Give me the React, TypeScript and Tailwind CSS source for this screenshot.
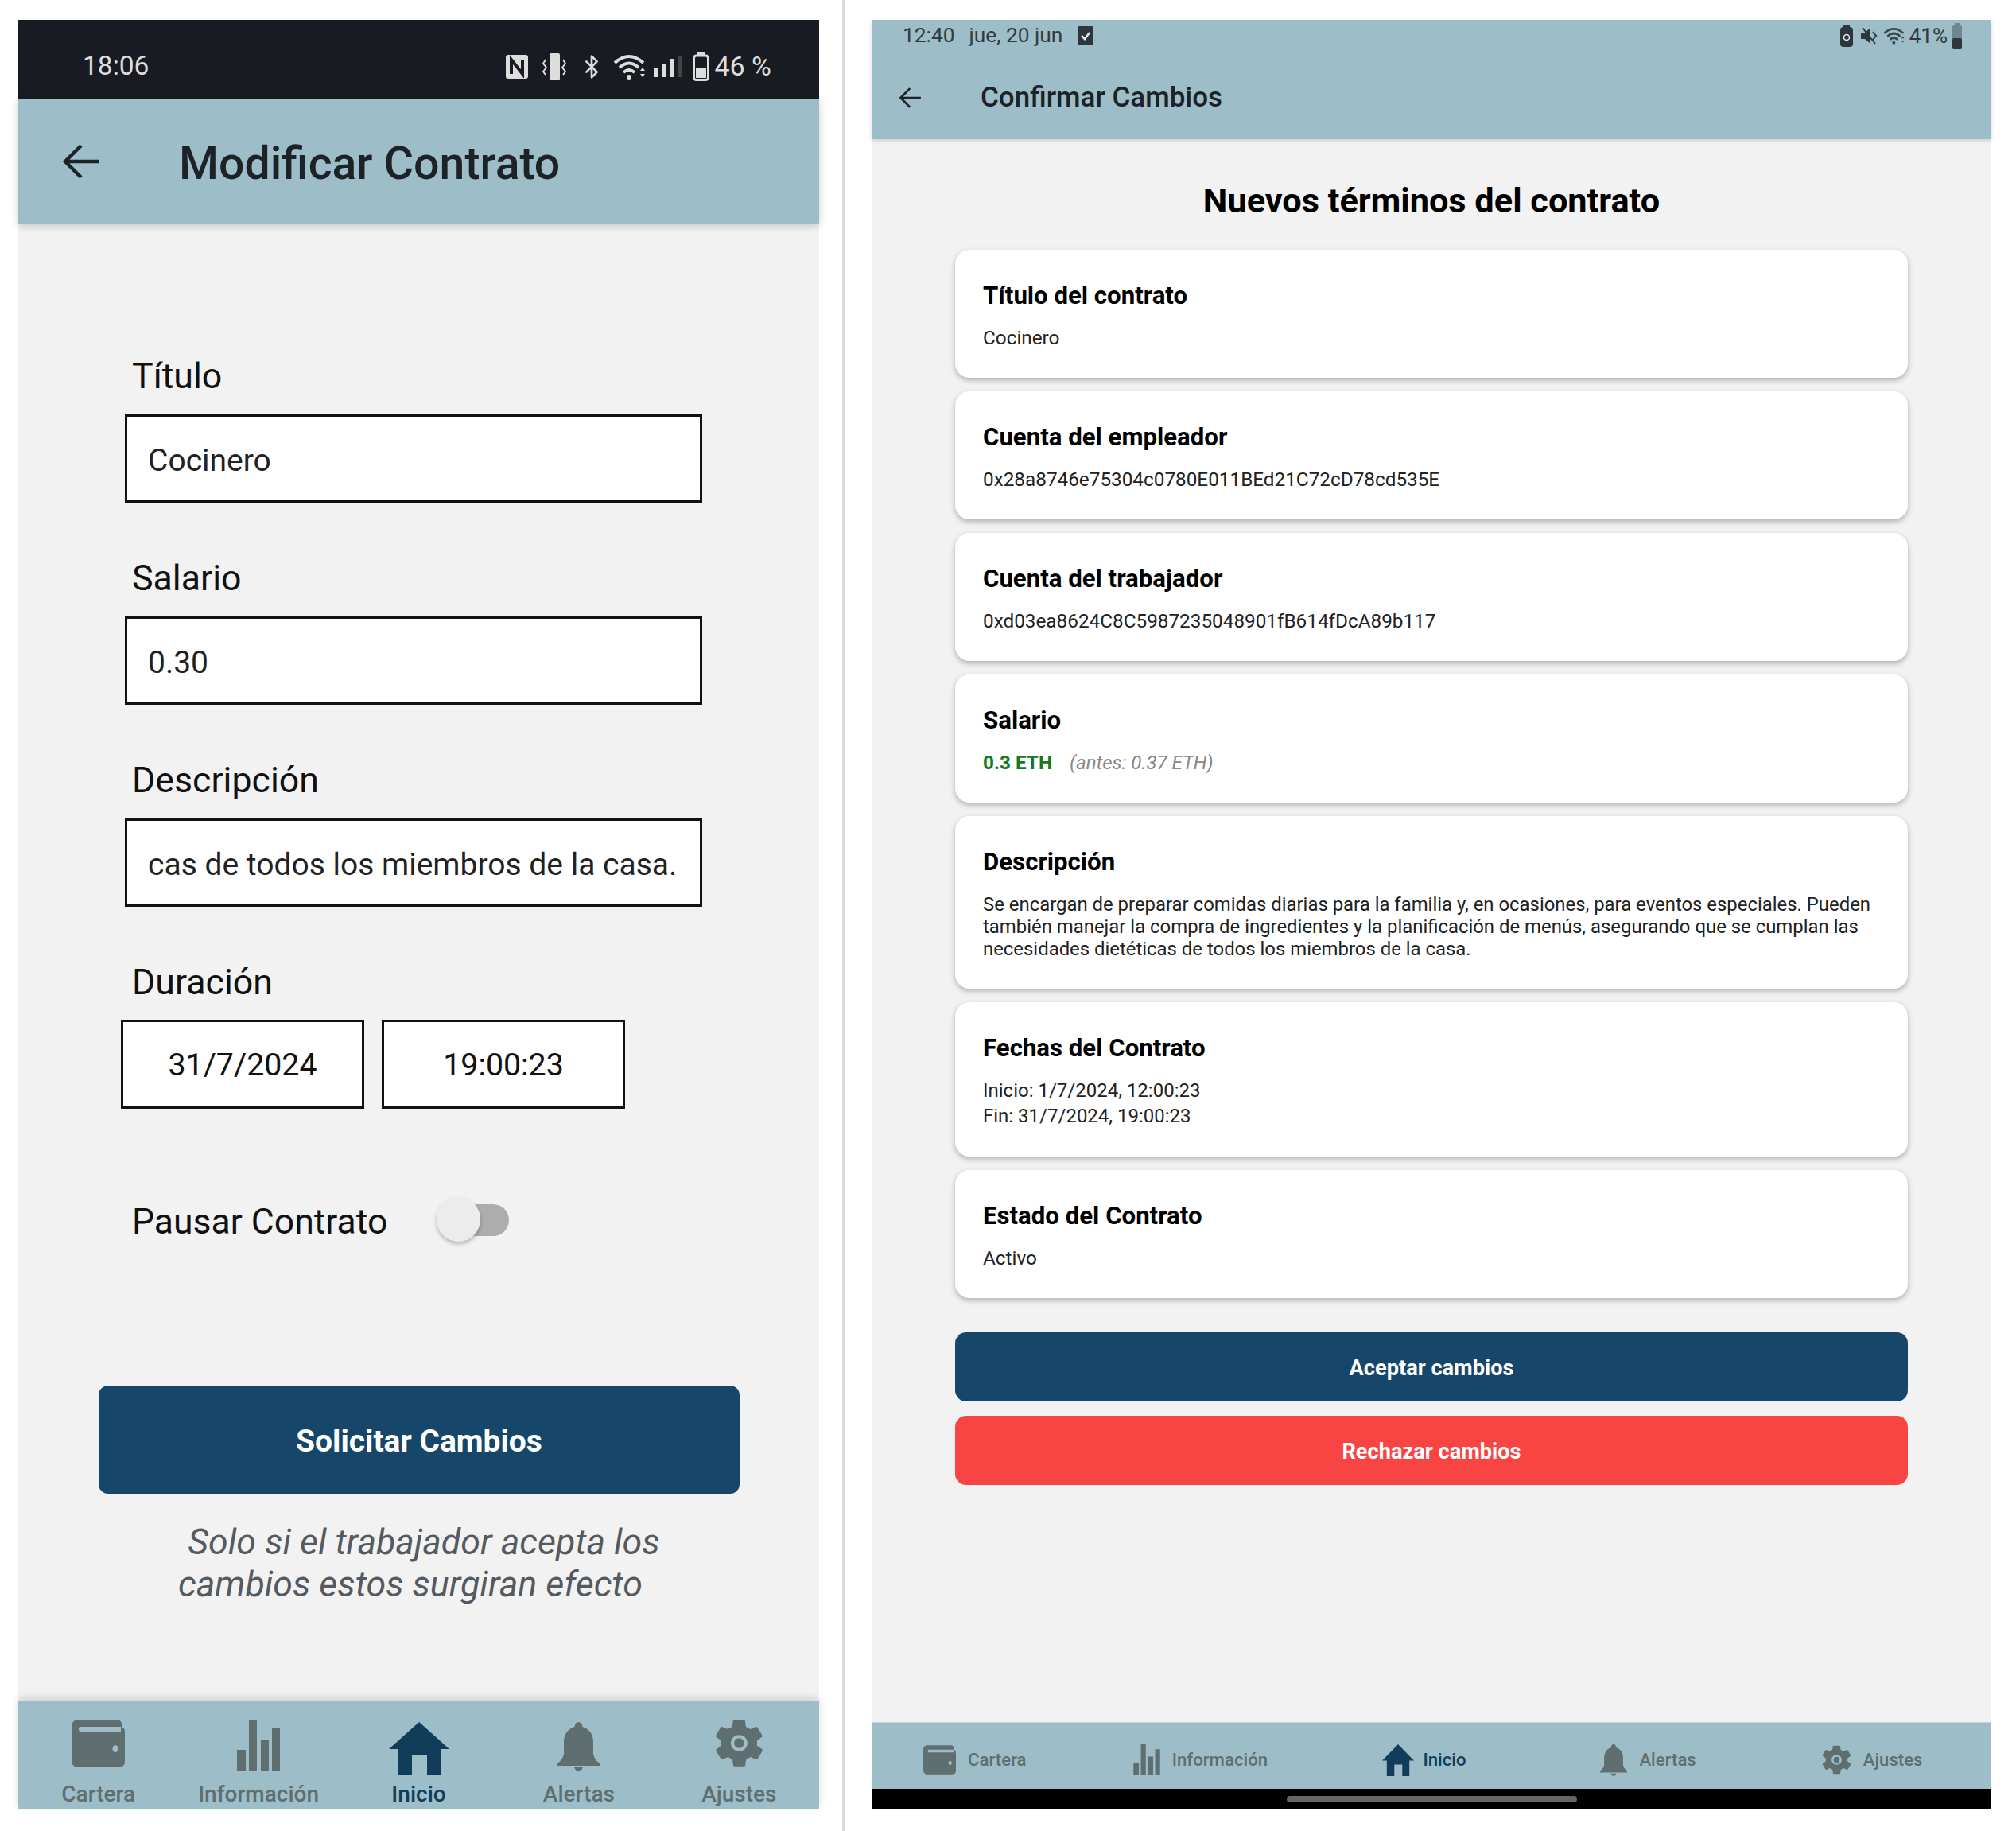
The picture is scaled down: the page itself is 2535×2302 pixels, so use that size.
import { Bluetooth } from "lucide-react";

const WalletIcon = ({ className }: { className: string }) => (
  <svg viewBox="0 0 67 60" className={className} fill="currentColor">
    <path fillRule="evenodd" d="M9 0H56Q63 0 63 6V10H65Q67 12 67 16V52Q67 60 59 60H9Q0 60 0 51V9Q0 0 9 0ZM10 9Q8 12 10 15H62V9ZM55 32a3.5 4.5 0 1 0 .01 0Z" />
  </svg>
);

const BarsIcon = ({ className }: { className: string }) => (
  <svg viewBox="0 0 54 63" className={className} fill="currentColor">
    <rect x="0" y="37" width="11" height="26" />
    <rect x="15" y="0" width="10" height="63" />
    <rect x="30" y="25" width="10" height="38" />
    <rect x="44" y="10" width="10" height="53" />
  </svg>
);

const HomeIcon = ({ className }: { className: string }) => (
  <svg viewBox="0 0 76 66" preserveAspectRatio="none" className={className} fill="currentColor">
    <path d="M38 0L76 34H65V66H48V42H29V66H11V34H0Z" />
  </svg>
);

const BellIcon = ({ className }: { className: string }) => (
  <svg viewBox="0 0 53 62" className={className} fill="currentColor">
    <path d="M26.5 0Q31 0 31.5 6Q44 10 45 24V40Q46 47 53 52V55H0V52Q7 47 8 40V24Q9 10 21.5 6Q22 0 26.5 0ZM21 57H32Q30 62 26.5 62Q23 62 21 57Z" />
  </svg>
);

const GearIcon = ({ className }: { className: string }) => (
  <svg viewBox="40 50 432 412" className={className} fill="currentColor">
    <path d="M413.967 276.8c1.06-6.235 1.06-13.518 1.06-20.8s-1.06-13.518-1.06-20.8l44.667-34.318c4.26-3.118 5.319-8.317 2.13-13.518L418.215 115.6c-2.129-4.164-8.507-6.235-12.767-4.164l-53.186 20.801c-10.638-8.318-23.394-15.601-36.16-20.801l-8.508-55.117c-1.06-4.154-5.319-8.318-10.638-8.318h-85.098c-5.318 0-9.577 4.164-10.637 8.318l-8.518 55.117c-12.767 5.2-24.464 12.482-36.171 20.801l-53.186-20.801c-5.319-2.071-10.638 0-12.767 4.164L49.1 187.365c-2.119 4.153-1.061 10.399 2.129 13.518L96.97 235.2c0 7.282-1.06 13.518-1.06 20.8s1.06 13.518 1.06 20.8l-44.668 34.318c-4.26 3.118-5.318 8.317-2.13 13.518L92.721 396.4c2.13 4.164 8.508 6.235 12.767 4.164l53.187-20.801c10.637 8.318 23.394 15.601 36.16 20.801l8.508 55.117c1.069 5.2 5.318 8.318 10.637 8.318h85.098c5.319 0 9.578-4.164 10.638-8.318l8.518-55.117c12.757-5.2 24.464-12.482 36.16-20.801l53.187 20.801c5.318 2.071 10.637 0 12.767-4.164l42.549-71.765c2.129-4.153 1.06-10.399-2.13-13.518l-46.8-34.317zm-158.499 52c-41.489 0-74.46-32.235-74.46-72.8s32.971-72.8 74.46-72.8 74.461 32.235 74.461 72.8-32.972 72.8-74.461 72.8z" />
    <circle cx="255" cy="256" r="44" />
  </svg>
);

const BackArrow = ({ className }: { className: string }) => (
  <svg viewBox="0 0 47 44" className={className} fill="none" stroke="currentColor" strokeWidth="4.5">
    <path d="M47 22H4M24 2L4 22L24 42" />
  </svg>
);

const Wifi = ({ className }: { className: string }) => (
  <svg viewBox="0 0 42 34" className={className} fill="none" stroke="currentColor" strokeWidth="4">
    <path d="M2 12Q20 -4 38 12M8 18Q20 7 32 18M13 24Q20 18 27 24" />
    <circle cx="20" cy="30" r="3" fill="currentColor" stroke="none" />
    <path d="M34 22L37 18L40 22ZM34 26L37 30L40 26Z" fill="currentColor" stroke="none" />
  </svg>
);

const tabs = [
  { label: "Cartera", icon: WalletIcon, left: "w-[67px] h-[60px] mt-[1px]", right: "w-[41px] h-[37px] ml-[-4px]" },
  { label: "Información", icon: BarsIcon, left: "w-[54px] h-[63px] mt-[2px]", right: "w-[34px] h-[39px]" },
  { label: "Inicio", icon: HomeIcon, left: "w-[76px] h-[66px] mt-[4px]", right: "w-[40px] h-[40px] mr-[-4px]", active: true },
  { label: "Alertas", icon: BellIcon, left: "w-[53px] h-[62px] mt-[4px]", right: "w-[34px] h-[40px]" },
  { label: "Ajustes", icon: GearIcon, left: "w-[61px] h-[61px]", right: "w-[37px] h-[37px]" },
];

const Field = ({ label, value }: { label: string; value: string }) => (
  <div className="mb-[68px]">
    <div className="ml-[9px] mb-[21px] h-[54px] text-[44.7px] leading-[54px] text-[#111]">{label}</div>
    <div className="w-[726px] h-[111px] border-[3px] border-[#111] bg-white pl-[26px] pt-[5px] flex items-center text-[39px] text-[#222] whitespace-nowrap">
      {value}
    </div>
  </div>
);

const Card = ({ title, children }: { title: string; children: React.ReactNode }) => (
  <div className="bg-white rounded-[18px] shadow-[0_3px_7px_rgba(0,0,0,0.28)] pl-[35px] pr-[30px] pt-[35px] pb-[36px]">
    <div className="text-[31.2px] leading-[46px] font-bold text-black mb-[16px]">{title}</div>
    <div className="text-[24.3px] leading-[28px] text-[#222]">{children}</div>
  </div>
);

export default function App() {
  return (
    <div className="w-[2535px] h-[2302px] bg-white flex items-start pt-[25px] pl-[23px] font-['Roboto',sans-serif] overflow-hidden">
      {/* Phone */}
      <div className="w-[1007px] h-[2249px] bg-[#f2f2f2] flex flex-col">
        <div className="h-[99px] pt-[18px] bg-[#181c22] text-[#dddddd] flex items-center justify-between pl-[81px] pr-[60px]">
          <span className="text-[33.5px]">18:06</span>
          <div className="flex items-center">
            <svg viewBox="0 0 28 30" className="w-[28px] h-[30px] mr-[18px]">
              <rect width="28" height="30" rx="3" fill="#dddddd" />
              <path d="M7 24V6L21 24V6" fill="none" stroke="#181c22" strokeWidth="4" />
            </svg>
            <svg viewBox="0 0 30 34" className="w-[30px] h-[34px] mr-[16px]" fill="#dddddd">
              <rect x="9" y="0" width="13" height="34" rx="2" />
              <path d="M4 8L1 13L5 18L1 23L4 27M26 8L29 13L25 18L29 23L26 27" fill="none" stroke="#dddddd" strokeWidth="2" />
            </svg>
            <Bluetooth className="w-[32px] h-[36px] mr-[11px]" strokeWidth={2} />
            <Wifi className="w-[42px] h-[34px] mr-[9px]" />
            <svg viewBox="0 0 36 26" className="w-[36px] h-[26px] mr-[13px]" fill="#dddddd">
              <rect x="0" y="15" width="6" height="11" />
              <rect x="10" y="9" width="6" height="17" />
              <rect x="20" y="3" width="6" height="23" />
              <rect x="30" y="0" width="5" height="26" fill="#444" />
            </svg>
            <svg viewBox="0 0 21 36" className="w-[21px] h-[36px] mr-[6px]">
              <rect x="6" y="0" width="9" height="3" fill="#dddddd" />
              <rect x="1.5" y="4" width="18" height="30.5" rx="3" fill="none" stroke="#dddddd" strokeWidth="3" />
              <rect x="4" y="19" width="13" height="13" fill="#dddddd" />
            </svg>
            <span className="text-[34px]">46 %</span>
          </div>
        </div>
        <div className="relative h-[157px] bg-[#9dbdc8] flex items-center shadow-[0_3px_10px_rgba(0,0,0,0.2)]">
          <BackArrow className="ml-[55px] w-[47px] h-[44px] text-[#1d2226]" />
          <span className="ml-[100px] pt-[6px] text-[57.2px] font-medium text-[#1d2226]">Modificar Contrato</span>
        </div>

        <div className="flex-1 pt-[165px] pl-[134px]">
          <Field label="Título" value="Cocinero" />
          <Field label="Salario" value="0.30" />
          <Field label="Descripción" value="cas de todos los miembros de la casa." />
          <div className="ml-[9px] mb-[22px] h-[54px] text-[44.7px] leading-[54px] text-[#111]">Duración</div>
          <div className="flex gap-[22px] ml-[-5px] mt-[-2px]">
            <div className="w-[306px] h-[112px] border-[3px] border-[#111] bg-white pt-[2px] flex items-center justify-center text-[39.3px] text-[#111]">31/7/2024</div>
            <div className="w-[306px] h-[112px] border-[3px] border-[#111] bg-white pt-[2px] flex items-center justify-center text-[39.3px] text-[#111]">19:00:23</div>
          </div>
          <div className="ml-[9px] mt-[112px] h-[60px] flex items-center">
            <span className="text-[44.5px] text-[#111]">Pausar Contrato</span>
            <div className="relative ml-[62px] w-[91px] h-[40px] ">
              <div className="absolute right-0 top-[-2px] w-[60px] h-[40px] rounded-full bg-[#adadad]" />
              <div className="absolute left-0 top-[-11px] w-[55px] h-[56px] rounded-full bg-[#ececec] shadow-[0_3px_5px_rgba(0,0,0,0.25)]" />
            </div>
          </div>
          <div className="ml-[-33px] mt-[176px] w-[806px] h-[136px] pt-[4px] rounded-[12px] bg-[#16476a] flex items-center justify-center text-[39px] font-bold text-white">
            Solicitar Cambios
          </div>
          <div className="ml-[-33px] mt-[35px] w-[806px] text-center text-[44.7px] leading-[53px] italic text-[#555a60]">
            <div className="pl-[12px]">Solo si el trabajador acepta los</div>
            <div className="pr-[22px]">cambios estos surgiran efecto</div>
          </div>
        </div>

        <div className="relative h-[136px] bg-[#9dbdc8] flex shadow-[0_-3px_10px_rgba(0,0,0,0.15)]">
          {tabs.map((t) => (
            <div key={t.label} className={`flex-1 flex flex-col items-center pt-[23px] ${t.active ? "text-[#123d5a]" : "text-[#5f6f6f]"}`}>
              <div className="h-[80px]">
                <t.icon className={t.left} />
              </div>
              <span className="text-[28px] leading-[36px] font-medium">{t.label}</span>
            </div>
          ))}
        </div>
      </div>

      {/* Divider between the two screenshots */}
      <div className="ml-[29px] mt-[-25px] w-[3px] h-[2302px] bg-[#d9d9d9]" />

      {/* Tablet */}
      <div className="ml-[34px] w-[1408px] h-[2249px] bg-[#f2f2f2] flex flex-col">
        <div className="relative h-[150px] bg-[#9dbdc8] flex flex-col shadow-[0_2px_5px_rgba(0,0,0,0.15)]">
          <div className="h-[40px] flex items-center justify-between pl-[39px] pr-[37px] text-[26.3px] text-[#333b40]">
            <div className="flex items-center">
              <span>12:40</span>
              <span className="ml-[18px]">jue, 20 jun</span>
              <svg viewBox="0 0 20 24" className="ml-[19px] w-[20px] h-[24px]">
                <rect width="20" height="24" rx="2" fill="#2d363b" />
                <path d="M5 12L9 16L15 8" fill="none" stroke="#dfe8ec" strokeWidth="2.5" />
              </svg>
            </div>
            <div className="flex items-center">
              <svg viewBox="0 0 16 28" className="w-[16px] h-[28px] mr-[10px]">
                <rect x="0" y="3" width="16" height="25" rx="4" fill="#2d363b" />
                <rect x="4" y="0" width="8" height="4" fill="#2d363b" />
                <circle cx="8" cy="16" r="3.5" fill="none" stroke="#dfe8ec" strokeWidth="1.5" />
              </svg>
              <svg viewBox="0 0 22 24" className="w-[22px] h-[24px] mr-[6px]">
                <path d="M0 8H5L12 2V22L5 16H0Z" fill="#2d363b" />
                <path d="M2 2L18 22M15 7L19 12L15 17" fill="none" stroke="#2d363b" strokeWidth="2" />
              </svg>
              <Wifi className="w-[28px] h-[26px] mr-[5px] text-[#3c4a50]" />
              <span className="text-[26px]">41%</span>
              <svg viewBox="0 0 12 32" className="w-[12px] h-[32px] ml-[6px]">
                <rect x="3" y="0" width="6" height="4" fill="#6d8690" />
                <rect x="0" y="3" width="12" height="29" rx="2" fill="#6d8690" />
                <rect x="0" y="19" width="12" height="13" rx="2" fill="#2d363b" />
              </svg>
            </div>
          </div>
          <div className="flex items-center mt-[32px]">
            <BackArrow className="ml-[34px] w-[28px] h-[26px] text-[#1d2226]" />
            <span className="ml-[75px] text-[35px] font-medium text-[#1d2226]">Confirmar Cambios</span>
          </div>
        </div>

        <div className="flex-1 px-[105px]">
          <h1 className="mt-[49px] mb-[32px] text-center text-[43.3px] leading-[58px] font-bold text-black">Nuevos términos del contrato</h1>
          <div className="flex flex-col gap-[17px]">
            <Card title="Título del contrato">Cocinero</Card>
            <Card title="Cuenta del empleador">0x28a8746e75304c0780E011BEd21C72cD78cd535E</Card>
            <Card title="Cuenta del trabajador">0xd03ea8624C8C5987235048901fB614fDcA89b117</Card>
            <Card title="Salario">
              <span className="font-bold text-[#137a1e]">0.3 ETH</span>
              <span className="ml-[22px] italic text-[#888] text-[24px]">(antes: 0.37 ETH)</span>
            </Card>
            <Card title="Descripción">
              <div className="text-[23.9px]">
                Se encargan de preparar comidas diarias para la familia y, en ocasiones, para eventos especiales. Pueden también manejar la compra de ingredientes y la planificación de menús, asegurando que se cumplan las necesidades dietéticas de todos los miembros de la casa.
              </div>
            </Card>
            <Card title="Fechas del Contrato">
              <div className="mt-[-2px] mb-[-1px] text-[24px]">
                <div className="leading-[32px]">Inicio: 1/7/2024, 12:00:23</div>
                <div className="leading-[32px]">Fin: 31/7/2024, 19:00:23</div>
              </div>
            </Card>
            <Card title="Estado del Contrato">Activo</Card>
          </div>
          <div className="mt-[43px] h-[87px] pt-[3px] rounded-[14px] bg-[#16476a] flex items-center justify-center text-[27.2px] font-bold text-white">Aceptar cambios</div>
          <div className="mt-[18px] h-[87px] pt-[3px] rounded-[14px] bg-[#f94444] flex items-center justify-center text-[27.2px] font-bold text-white">Rechazar cambios</div>
        </div>

        <div className="h-[84px] bg-[#9dbdc8] flex border-t border-[#c5d4da]">
          {tabs.map((t) => (
            <div key={t.label} className={`flex-1 flex items-center justify-center pr-[18px] pt-[10px] ${t.active ? "text-[#123d5a]" : "text-[#5f6f6f]"}`}>
              <t.icon className={t.right} />
              <span className="ml-[15px] text-[22.2px] font-medium">{t.label}</span>
            </div>
          ))}
        </div>
        <div className="h-[25px] bg-black flex items-center justify-center">
          <div className="w-[365px] h-[8px] rounded-full bg-[#666]" />
        </div>
      </div>
    </div>
  );
}
